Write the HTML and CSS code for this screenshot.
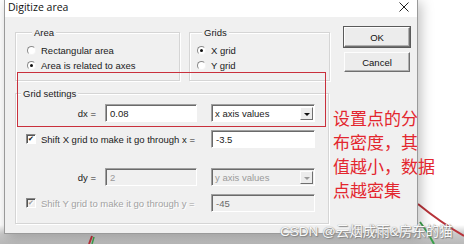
FILE: index.html
```html
<!DOCTYPE html>
<html lang="en">
<head>
  <meta charset="UTF-8">
  <title>Digitize area</title>
  <link rel="stylesheet" href="styles.css">
</head>
<body>
  <svg class="plot" width="464" height="244" viewBox="0 0 464 244">
    <path d="M418 204 Q440 222 464 236" stroke="#b8333a" stroke-width="2" fill="none"/>
    <path d="M420 222 Q428 232 434 244" stroke="#3aa04a" stroke-width="2" fill="none"/>
    <path d="M92 236 L89 244" stroke="#b8333a" stroke-width="2" fill="none"/>
    <path d="M94 237 L92 244" stroke="#3aa04a" stroke-width="1.5" fill="none"/>
  </svg>

  <div class="dialog">
    <div class="titlebar">
      <span class="title">Digitize area</span>
      <svg class="close" width="10" height="10" viewBox="0 0 10 10">
        <path d="M0.5 0.5 L9.5 9.5 M9.5 0.5 L0.5 9.5" stroke="#222" stroke-width="1"/>
      </svg>
    </div>

    <div class="content">
      <div class="top-row">
        <div class="group area-group">
          <span class="group-title">Area</span>
          <label class="radio-row first"><span class="radio"></span>Rectangular area</label>
          <label class="radio-row"><span class="radio checked"></span>Area is related to axes</label>
        </div>
        <div class="group grids-group">
          <span class="group-title">Grids</span>
          <label class="radio-row first"><span class="radio checked"></span>X grid</label>
          <label class="radio-row"><span class="radio"></span>Y grid</label>
        </div>
        <div class="buttons">
          <button class="btn default">OK</button>
          <button class="btn">Cancel</button>
        </div>
      </div>

      <div class="group settings-group">
        <span class="group-title">Grid settings</span>

        <div class="row first">
          <span class="lead">dx =</span>
          <div class="field">0.08</div>
          <div class="select"><span>x axis values</span><span class="arrow"></span></div>
        </div>

        <div class="row">
          <label class="check-label"><span class="checkbox checked"></span>Shift X grid to make it go through x =</label>
          <div class="field wide">-3.5</div>
        </div>

        <div class="row gap">
          <span class="lead">dy =</span>
          <div class="field disabled">2</div>
          <div class="select disabled"><span>y axis values</span><span class="arrow"></span></div>
        </div>

        <div class="row">
          <label class="check-label disabled"><span class="checkbox checked disabled"></span>Shift Y grid to make it go through y =</label>
          <div class="field wide disabled-dark">-45</div>
        </div>
      </div>
    </div>
  </div>

  <!-- annotation over the screenshot -->
  <div class="mark-box"></div>
  <p class="note">设置点的分<br>布密度，其<br>值越小，数据<br>点越密集</p>
  <p class="watermark">CSDN @云烟成雨&amp;房东的猫</p>
</body>
</html>
```

FILE: styles.css
```css
/* page */
body {
  margin: 0;
  width: 464px;
  height: 244px;
  overflow: hidden;
  position: relative;
  font-family: "Liberation Sans", Arial, sans-serif;
  font-size: 9.5px;
  color: #1a1a1a;
  background: linear-gradient(to bottom, #ffffff 0, #ffffff 225px, #c9c9c9 234px, #b9b9b9 244px);
}

.plot {
  position: absolute;
  left: 0;
  top: 0;
}

/* dialog window */
.dialog {
  position: relative;
  margin-left: 4px;
  width: 414px;
  height: 234px;
  box-sizing: border-box;
  border: 1px solid #9a9a9a;
  border-top: none;
  background: #f0f0f0;
  box-shadow: 3px 2px 12px rgba(0, 0, 0, 0.25);
}

.titlebar {
  height: 17px;
  background: #fff;
  display: flex;
  align-items: flex-start;
  justify-content: space-between;
  padding: 0 8px 0 3px;
}

.title {
  font-family: "Open Sans", "Liberation Sans", sans-serif;
  font-size: 10.5px;
  line-height: 14px;
  color: #111;
}

.close {
  margin-top: 2px;
}

.content {
  padding: 10px 0 0 10px;
}

.top-row {
  display: flex;
  align-items: flex-start;
}

/* group boxes */
.group {
  box-sizing: border-box;
  border: 1px solid #d5d5d5;
  box-shadow: 1px 1px 0 #fff, inset 1px 1px 0 #fff;
}

.group-title {
  display: block;
  width: fit-content;
  height: 13px;
  line-height: 13px;
  margin: -7px 0 0 5px;
  padding: 0 2px;
  background: #f0f0f0;
}

.area-group {
  margin-top: 5px;
  width: 165px;
  height: 49px;
  padding-left: 11px;
}

.grids-group {
  margin-top: 5px;
  margin-left: 9px;
  width: 141px;
  height: 49px;
  padding-left: 7px;
}

.radio-row {
  display: flex;
  align-items: center;
  height: 15px;
  gap: 5px;
}

.radio-row.first {
  margin-top: 4px;
}

.radio {
  width: 9px;
  height: 9px;
  box-sizing: border-box;
  border-radius: 50%;
  border: 1px solid;
  border-color: #8a8a8a #f4f4f4 #f4f4f4 #8a8a8a;
  background: #fff;
  display: flex;
  align-items: center;
  justify-content: center;
}

.radio.checked::after {
  content: "";
  width: 3px;
  height: 3px;
  border-radius: 50%;
  background: #111;
}

/* OK / Cancel */
.buttons {
  display: flex;
  flex-direction: column;
  gap: 5px;
  margin-left: 14px;
}

.btn {
  width: 66px;
  height: 20px;
  padding: 0;
  font-family: inherit;
  font-size: 9.5px;
  color: #111;
  background: #ececec;
  border: 1px solid;
  border-color: #fdfdfd #6f6f6f #6f6f6f #fdfdfd;
  box-shadow: inset -1px -1px 0 #b0b0b0;
}

.btn.default {
  outline: 1px solid #5a5a5a;
  outline-offset: 0;
}

/* grid settings */
.settings-group {
  margin-top: 12px;
  width: 314px;
  height: 131px;
}

.row {
  display: grid;
  grid-template-columns: 80px 9px 92px 14px 104px;
  align-items: center;
  height: 18px;
  margin-top: 8px;
}

.row.first {
  margin-top: 4px;
}

.row.gap {
  margin-top: 20px;
}

.lead {
  text-align: right;
  grid-column: 1;
}

.field {
  grid-column: 3;
  height: 18px;
  box-sizing: border-box;
  border: 1px solid;
  border-color: #a0a0a0 #fff #fff #a0a0a0;
  box-shadow: inset 1px 1px 0 #6a6a6a;
  background: #fff;
  padding: 0 0 0 4px;
  line-height: 17px;
}

.field.wide {
  grid-column: 5;
}

.field.disabled {
  background: #f0f0f0;
  color: #9a9a9a;
}

.field.disabled-dark {
  background: #f0f0f0;
  color: #6a6a6a;
}

.select {
  grid-column: 5;
  height: 18px;
  box-sizing: border-box;
  border: 1px solid;
  border-color: #a0a0a0 #fff #fff #a0a0a0;
  box-shadow: inset 1px 1px 0 #6a6a6a;
  background: #fff;
  display: flex;
  align-items: center;
  justify-content: space-between;
  padding: 1px 1px 0 3px;
}

.select.disabled {
  background: #f0f0f0;
  color: #9a9a9a;
}

.arrow {
  width: 13px;
  height: 13px;
  box-sizing: border-box;
  background: #ececec;
  border: 1px solid;
  border-color: #fdfdfd #6f6f6f #6f6f6f #fdfdfd;
  display: flex;
  align-items: center;
  justify-content: center;
}

.arrow::after {
  content: "";
  border-left: 3px solid transparent;
  border-right: 3px solid transparent;
  border-top: 3px solid #111;
  margin-top: 1px;
}

.select.disabled .arrow::after {
  border-top-color: #9a9a9a;
}

.check-label {
  grid-column: 1 / 5;
  display: flex;
  align-items: center;
  gap: 5px;
  padding-left: 10px;
}

.check-label.disabled {
  color: #a2a2a2;
  text-shadow: 1px 1px 0 #fff;
}

.checkbox {
  width: 10px;
  height: 10px;
  box-sizing: border-box;
  border: 1px solid;
  border-color: #8a8a8a #fff #fff #8a8a8a;
  box-shadow: inset 1px 1px 0 #555;
  background: #fff;
  display: flex;
  align-items: center;
  justify-content: center;
  font-size: 8px;
  line-height: 8px;
}

.checkbox.checked::after {
  content: "\2714";
  color: #111;
  font-family: "DejaVu Sans", sans-serif;
  font-size: 7px;
}

.checkbox.disabled {
  background: #f0f0f0;
}

.checkbox.disabled::after {
  color: #9a9a9a;
}

/* annotation layer */
.mark-box {
  position: absolute;
  left: 17px;
  top: 72px;
  width: 309px;
  height: 55px;
  box-sizing: border-box;
  border: 1.5px solid #c9303c;
}

.note {
  position: absolute;
  left: 333px;
  top: 106px;
  margin: 0;
  font-family: "Noto Sans CJK SC", sans-serif;
  font-size: 17px;
  line-height: 24px;
  color: #e3262e;
  white-space: nowrap;
}

.watermark {
  position: absolute;
  left: 280px;
  top: 224px;
  margin: 0;
  font-family: "Liberation Sans", "Noto Sans CJK SC", sans-serif;
  font-size: 13.5px;
  line-height: 16px;
  color: #fafafa;
  text-shadow: 0 0 1px #777, 1px 1px 1px #888;
  white-space: nowrap;
}
```
